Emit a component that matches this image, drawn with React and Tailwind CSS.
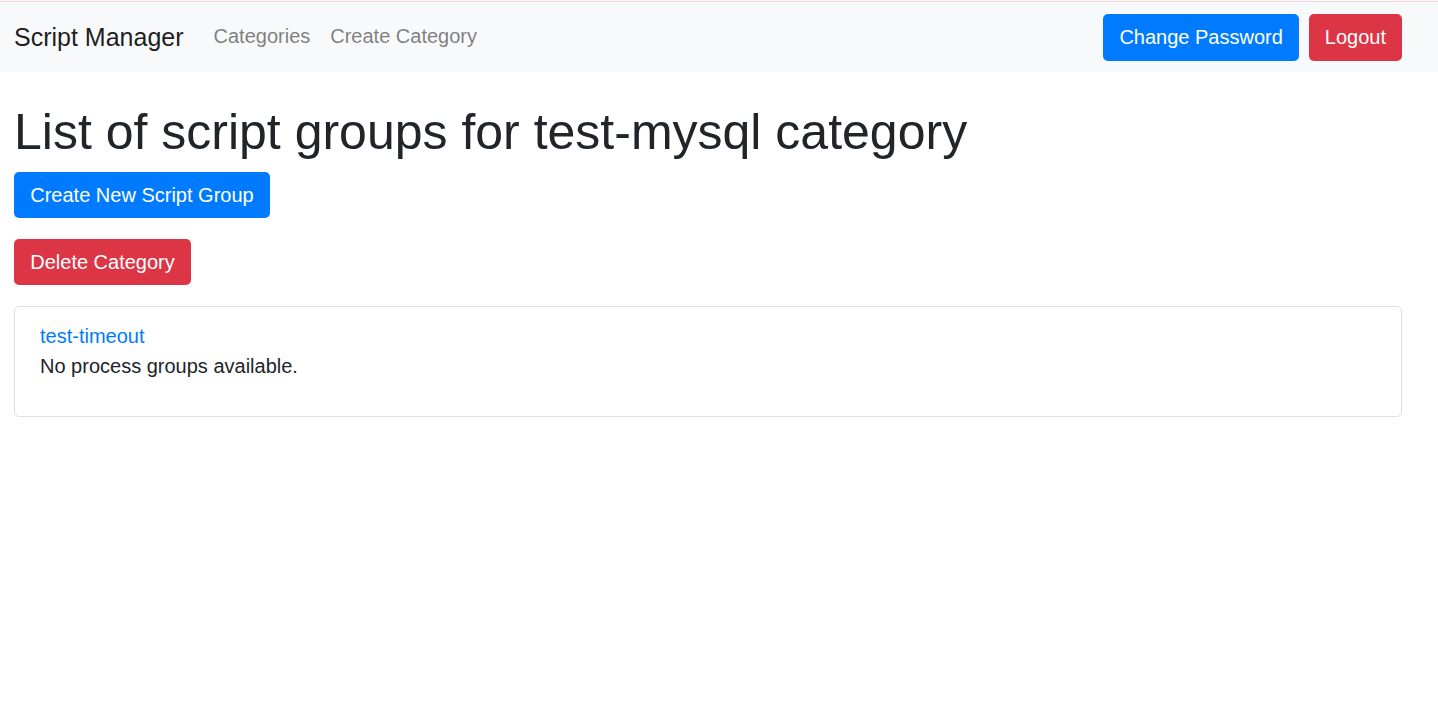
const NAV_LINKS = ['Categories', 'Create Category']

function Btn({ color, tight, children }) {
  const bg = color === 'red' ? 'bg-[#dc3545]' : 'bg-[#007bff]'
  const px = tight ? 'px-[16px]' : 'px-[16.25px]'
  return (
    <button
      className={`${bg} ${px} h-[46.5px] rounded-[5px] text-white text-[20px] leading-[30px] flex items-center`}
    >
      {children}
    </button>
  )
}

export default function App() {
  return (
    <div className="min-h-screen bg-white text-[#212529] font-['Liberation_Sans',Arial,sans-serif]">
      <nav className="bg-[#f8f9fa]">
        <div className="h-px" />
        <div className="h-px bg-[#f8d7da]" />
        <div className="ml-[14px] w-[1388px] flex items-center pt-[12px] pb-[11px]">
          <span className="text-[25px] leading-[37px] text-black/90 mr-[20px]">Script Manager</span>
          <div className="flex mb-[2px]">
            {NAV_LINKS.map(l => (
              <a key={l} className="px-[10px] text-[20px] leading-[30px] text-black/50">{l}</a>
            ))}
          </div>
          <div className="ml-auto flex gap-[10px]">
            <Btn tight>Change Password</Btn>
            <Btn tight color="red">Logout</Btn>
          </div>
        </div>
      </nav>

      <main className="ml-[14px] w-[1388px] pt-[30px]">
        <h1 className="text-[50px] leading-[60px] mb-[10px]">List of script groups for test-mysql category</h1>
        <div className="flex flex-col items-start gap-[20.5px]">
          <Btn>Create New Script Group</Btn>
          <Btn color="red">Delete Category</Btn>
        </div>
        <div className="mt-[20.5px] border border-black/[0.125] rounded-[5px] px-[25px] pt-[14px] pb-[15px]">
          <a className="block text-[20px] leading-[30px] text-[#007bff]">test-timeout</a>
          <p className="text-[20px] leading-[30px] mb-[20px]">No process groups available.</p>
        </div>
      </main>
    </div>
  )
}
